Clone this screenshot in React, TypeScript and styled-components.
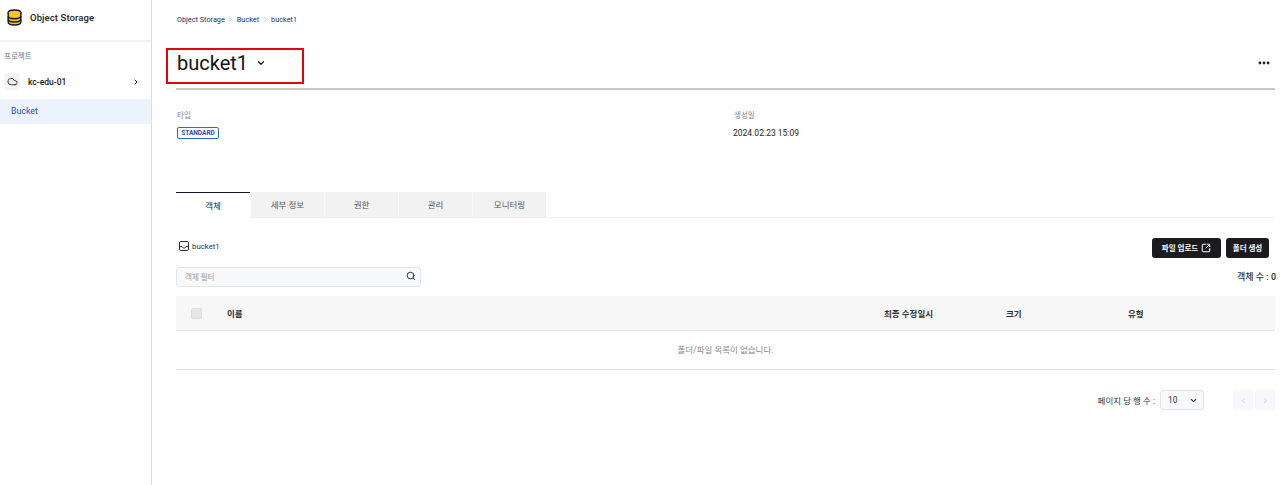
import React from "react";
import styled, { createGlobalStyle } from "styled-components";
import { ChevronDown, ChevronRight, ChevronLeft, Cloud, Search, SquareArrowOutUpRight, MoreHorizontal } from "lucide-react";

const Global = createGlobalStyle`
  html, body { margin: 0; padding: 0; background: #fff; }
  body { font-family: Roboto, "Noto Sans CJK KR", sans-serif; color: #1c1c1e; }
  * { box-sizing: border-box; }
`;
const Page = styled.div`display: flex; width: 1280px; height: 485px; overflow: hidden; background: #fff;`;
const Sidebar = styled.aside`width: 152px; flex: none; border-right: 1px solid #dcdcdc; height: 100%;`;
const Brand = styled.div`height: 42px; display: flex; align-items: center; gap: 7px; padding: 0 0 5px 6px; border-bottom: 2px solid #f2f2f2; font-size: 9.5px; font-weight: 500; letter-spacing: .1px;`;
const SectionLabel = styled.div`font-size: 7.5px; color: #777; padding: 10px 0 0 4px; line-height: 10px;`;
const Project = styled.div`display: flex; align-items: center; height: 17px; margin: 11px 0 0 4px; padding-right: 11px; font-size: 8.5px; font-weight: 500; gap: 8px;`;
const ProjectIcon = styled.span`width: 16px; height: 17px; background: #f5f5f5; border-radius: 3px; display: flex; align-items: center; justify-content: center;`;
const ProjectName = styled.span`flex: 1;`;
const NavItem = styled.div`margin-top: 9px; height: 25px; padding: 0 0 2px 11px; background: #edf3fe; color: #2a52be; font-size: 8.8px; display: flex; align-items: center;`;
const Main = styled.main`flex: 1; position: relative; padding: 0 5px 0 24px; min-width: 0;`;
const Crumbs = styled.nav`display: flex; align-items: center; gap: 2.5px; height: 38px; padding-left: 1px; font-size: 7.3px; color: #27305e;`;
const CrumbLast = styled.span`color: #333;`;
const TitleRow = styled.div`display: flex; align-items: center; height: 52px; padding: 2px 4px 2px 1px; border-bottom: 2px solid #c8c8c8;`;
const Title = styled.h1`margin: 0 8px 0 0; font-size: 20px; font-weight: 400; line-height: 24px; color: #111;`;
const Spacer = styled.div`flex: 1;`;
const Annotation = styled.div`position: absolute; left: 14px; top: 48px; width: 138px; height: 36px; border: 2px solid #e8000b; pointer-events: none;`;
const Meta = styled.section`display: grid; grid-template-columns: 557px 1fr; height: 102px; padding: 21px 0 0 0;`;
const MetaLabel = styled.div`font-size: 7.5px; color: #888; line-height: 10px; padding-left: 1px;`;
const Badge = styled.div`margin: 6px 0 0 1px; height: 12px; width: 42px; border: 1px solid #3763c6; border-radius: 2px; color: #2a4fae; font-size: 6.5px; font-weight: 700; line-height: 10px; text-align: center;`;
const MetaValue = styled.div`font-size: 8.5px; margin-top: 6px; line-height: 12px; color: #222;`;
const Tabs = styled.div`display: flex; height: 26px; border-bottom: 1px solid #eee;`;
const Tab = styled.div<{ $active?: boolean }>`
  width: 74px; display: flex; align-items: center; justify-content: center; font-size: 8.5px; padding-bottom: 2px;
  color: ${p => (p.$active ? "#222" : "#555")};
  background: ${p => (p.$active ? "#fff" : "#f2f2f2")};
  border-top: ${p => (p.$active ? "1px solid #11142e" : "none")};
  border-left: ${p => (p.$active ? "none" : "1px solid #fafafa")};
  margin-bottom: ${p => (p.$active ? "-1px" : "0")};
`;
const Toolbar = styled.div`display: flex; align-items: center; height: 20px; margin-top: 20px; padding-right: 6px; gap: 5px;`;
const Path = styled.div`display: flex; align-items: center; gap: 3px; flex: 1; font-size: 7.8px; padding: 0 0 4px 3px; color: #333;`;
const DarkButton = styled.button`height: 20px; border: 0; border-radius: 3px; background: #1b1b1d; color: #fff; font: 700 7.5px Roboto, "Noto Sans CJK KR", sans-serif; padding: 0 0 1px; display: flex; align-items: center; justify-content: center; gap: 4px;`;
const UploadButton = styled(DarkButton)`width: 69px; gap: 3px;`;
const FolderButton = styled(DarkButton)`width: 43px;`;
const FilterRow = styled.div`display: flex; align-items: center; justify-content: space-between; margin-top: 9px; height: 20px;`;
const Filter = styled.div`width: 245px; height: 20px; border: 1px solid #e3e6ec; border-radius: 3px; background: #f8f9fb; display: flex; align-items: center; justify-content: space-between; padding: 0 4px 2px 8px; font-size: 7.5px; color: #999;`;
const Count = styled.div`font-size: 9px; color: #333; font-weight: 500; margin: 0 -1px 2px 0;`;
const TableHead = styled.div`display: grid; grid-template-columns: 51px 657px 122px 122px 1fr; align-items: center; height: 35px; margin-top: 9px; background: #f7f7f7; border-bottom: 1px solid #e6e6e6; font-size: 8.5px; font-weight: 700; color: #333;`;
const CheckBox = styled.span`display: block; margin-left: 15px; width: 11px; height: 11px; background: #e6e6e6; border: 1px solid #dcdcdc; border-radius: 2px;`;
const Empty = styled.div`height: 39px; padding-bottom: 2px; border-bottom: 1px solid #e6e6e6; display: flex; align-items: center; justify-content: center; font-size: 8.5px; color: #888;`;
const Pagination = styled.div`display: flex; align-items: center; justify-content: flex-end; height: 20px; margin-top: 20px; font-size: 8.5px; color: #333; gap: 5px;`;
const SelectBox = styled.div`width: 44px; height: 20px; margin-right: 27px; border: 1px solid #dfe3ea; border-radius: 3px; background: #f8f9fb; display: flex; align-items: center; justify-content: space-between; padding: 0 5px 0 7px; font-size: 8.5px; font-weight: 400;`;
const PageButton = styled.div`width: 20px; height: 20px; border-radius: 3px; background: #f7f8fd; display: flex; align-items: center; justify-content: center; margin-left: -3px; color: #c6cbd8;`;

const DbIcon = () => (
  <svg width="17" height="17" viewBox="0 0 17 17" fill="none">
    <ellipse cx="8.5" cy="3.6" rx="6.3" ry="2.7" fill="#f6c915" stroke="#1a1a2e" strokeWidth="1.5" />
    <path d="M2.2 3.6v9.6c0 1.5 2.8 2.7 6.3 2.7s6.3-1.2 6.3-2.7V3.6" fill="#f6c915" stroke="#1a1a2e" strokeWidth="1.5" />
    <path d="M2.2 7c0 1.5 2.8 2.7 6.3 2.7s6.3-1.2 6.3-2.7M2.2 10.2c0 1.5 2.8 2.7 6.3 2.7s6.3-1.2 6.3-2.7" stroke="#1a1a2e" strokeWidth="1.5" />
  </svg>
);
const TrayIcon = () => (
  <svg width="10" height="10" viewBox="0 0 9 9" fill="none" stroke="#222" strokeWidth=".9">
    <rect x=".5" y=".5" width="8" height="8" rx="1" />
    <path d="M.5 5h2.200c.3.900 1 1.300 1.800 1.300S6 5.900 6.300 5h2.200" />
  </svg>
);

export default function App() {
  return (
    <Page>
      <Global />
      <Sidebar>
        <Brand><DbIcon />Object Storage</Brand>
        <SectionLabel>프로젝트</SectionLabel>
        <Project>
          <ProjectIcon><Cloud size={11} strokeWidth={1.8} /></ProjectIcon>
          <ProjectName>kc-edu-01</ProjectName>
          <ChevronRight size={8} strokeWidth={3} />
        </Project>
        <NavItem>Bucket</NavItem>
      </Sidebar>
      <Main>
        <Crumbs>
          <span>Object Storage</span><ChevronRight size={7} color="#999" />
          <span>Bucket</span><ChevronRight size={7} color="#999" />
          <CrumbLast>bucket1</CrumbLast>
        </Crumbs>
        <TitleRow>
          <Title>bucket1</Title>
          <ChevronDown size={10} strokeWidth={3} />
          <Spacer />
          <MoreHorizontal size={14} strokeWidth={2.8} />
        </TitleRow>
        <Annotation />
        <Meta>
          <div><MetaLabel>타입</MetaLabel><Badge>STANDARD</Badge></div>
          <div><MetaLabel>생성일</MetaLabel><MetaValue>2024.02.23 15:09</MetaValue></div>
        </Meta>
        <Tabs>
          <Tab $active>객체</Tab><Tab>세부 정보</Tab><Tab>권한</Tab><Tab>관리</Tab><Tab>모니터링</Tab>
        </Tabs>
        <Toolbar>
          <Path><TrayIcon />bucket1</Path>
          <UploadButton>파일 업로드<SquareArrowOutUpRight size={10} strokeWidth={2.4} /></UploadButton>
          <FolderButton>폴더 생성</FolderButton>
        </Toolbar>
        <FilterRow>
          <Filter>객체 필터<Search size={10} color="#333" strokeWidth={2.4} /></Filter>
          <Count>객체 수 : 0</Count>
        </FilterRow>
        <TableHead>
          <CheckBox /><span>이름</span><span>최종 수정일시</span><span>크기</span><span>유형</span>
        </TableHead>
        <Empty>폴더/파일 목록이 없습니다.</Empty>
        <Pagination>
          <span>페이지 당 행 수 :</span>
          <SelectBox>10<ChevronDown size={9} strokeWidth={3} /></SelectBox>
          <PageButton><ChevronLeft size={9} /></PageButton>
          <PageButton><ChevronRight size={9} /></PageButton>
        </Pagination>
      </Main>
    </Page>
  );
}
